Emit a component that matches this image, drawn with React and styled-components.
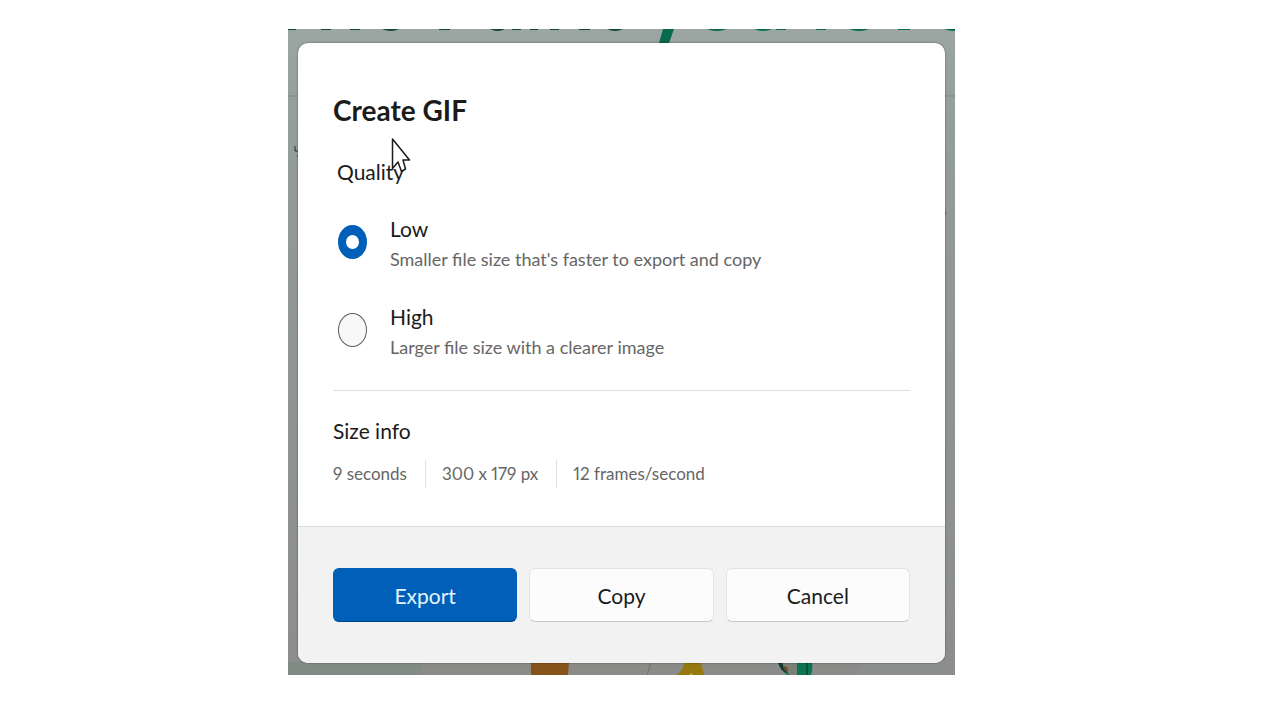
import React, { useState } from "react";
import styled, { createGlobalStyle } from "styled-components";

const qualities = [
  {
    value: "low",
    label: "Low",
    hint: "Smaller file size that's faster to export and copy",
  },
  {
    value: "high",
    label: "High",
    hint: "Larger file size with a clearer image",
  },
];

const sizeInfo = ["9 seconds", "300 x 179 px", "12 frames/second"];

const Backdrop = () => (
  <BackdropArt viewBox="0 0 667 646" preserveAspectRatio="none" aria-hidden="true">
    <defs>
      <linearGradient id="shade" x1="0" y1="0" x2="0" y2="1">
        <stop offset="0" stopColor="#9ba6a3" />
        <stop offset="0.15" stopColor="#939e9b" />
        <stop offset="0.4" stopColor="#929695" />
        <stop offset="1" stopColor="#8b8e8c" />
      </linearGradient>
    </defs>
    <rect width="667" height="646" fill="url(#shade)" />
    <path d="M0 67H10M657 67H667" stroke="#7c8784" />
    <g fill="#17453c">
      <path d="M0 0h8v1H0zM33 0h10v1H33zM62 0h10v1H62zM94 0h17q-8 4-17 0zM151 0h11v1h-11zM202 0h15q-7 4-15 0zM224 0h9v1h-9zM242 0h8v1h-8zM262 0h9v1h-9zM291 0h11v1h-11zM319 0h16q-8 4-16 0z" />
    </g>
    <g fill="#08694d">
      <path d="M375 0H386L381 14H371zM419 0h20q-10 4-20 0zM466 0h18q-9 4-18 0zM488 0h10v1h-10zM528 0h10v1h-10zM561 0h20q-10 4-20 0zM610 0h12v1h-12zM656 0h11v2q-6 0-11-2z" />
    </g>
    <path d="M7 117v5h3M9 127h1" stroke="#252c2a" fill="none" />
    <path d="M657 182v4" stroke="#4c5452" />
    <path d="M0 633H134V646H0z" fill="#818b86" />
    <path d="M134 633H570V646H134z" fill="#8b8b8a" />
    <path d="M243 633H281L280 646H243z" fill="#86531c" />
    <path d="M363 633L359 646" stroke="#6f706e" />
    <path d="M397 633H413L416 646H389q5-4 8-13z" fill="#94790f" />
    <path d="M401 646q2-4 4 0z" fill="#b5a450" />
    <path d="M490 633H524q1 8-1 13h-23q-8-4-10-13z" fill="#0c7452" />
    <path d="M494 633H509V646H502q-7-4-8-13z" fill="#798176" />
    <path d="M490 633h4q2 8 7 12q-9-3-11-12z" fill="#17372d" />
    <path d="M495 638q5-3 5 5q-4-1-5-5z" fill="#65502d" />
    <path d="M519 633v13" stroke="#075239" strokeWidth="2" />
  </BackdropArt>
);

const Cursor = () => (
  <CursorIcon width="20" height="36" viewBox="0 0 20 36" aria-hidden="true">
    <path
      d="M1.5 1V30.500L7 24L10.500 33.500L14.500 31L12 22H18.500Z"
      fill="#fff"
      stroke="#1b1b1b"
      strokeWidth="1.500"
      strokeLinejoin="round"
    />
  </CursorIcon>
);

const App = () => {
  const [quality, setQuality] = useState("low");

  return (
    <Page>
      <GlobalStyle />
      <Stage>
        <Backdrop />
        <Dialog role="dialog" aria-labelledby="dialog-title">
          <Content>
            <Title id="dialog-title">Create GIF</Title>
            <Options>
              <Legend>
                Quality
                <Cursor />
              </Legend>
              {qualities.map(({ value, label, hint }) => (
                <Option key={value}>
                  <Radio
                    type="radio"
                    name="quality"
                    value={value}
                    checked={quality === value}
                    onChange={(e) => setQuality(e.target.value)}
                  />
                  <OptionText>
                    <OptionLabel>{label}</OptionLabel>
                    <OptionHint>{hint}</OptionHint>
                  </OptionText>
                </Option>
              ))}
            </Options>
            <Divider />
            <SectionTitle>Size info</SectionTitle>
            <InfoList>
              {sizeInfo.map((info) => (
                <li key={info}>{info}</li>
              ))}
            </InfoList>
          </Content>
          <Footer>
            <Button type="button" $primary>
              Export
            </Button>
            <Button type="button">Copy</Button>
            <Button type="button">Cancel</Button>
          </Footer>
        </Dialog>
      </Stage>
    </Page>
  );
};

const GlobalStyle = createGlobalStyle`
  * {
    box-sizing: border-box;
  }
  body {
    margin: 0;
    background-color: #fff;
    color: #1b1b1b;
    font-family: Lato, "Open Sans", sans-serif;
    font-variant-numeric: proportional-nums;
  }
`;

const Page = styled.main`
  display: flex;
  justify-content: center;
  padding: 29px 37px 45px 0;
`;

const Stage = styled.div`
  position: relative;
  width: 100%;
  max-width: 667px;
  padding: 14px 10px 12px;
`;

const BackdropArt = styled.svg`
  position: absolute;
  inset: 0;
  width: 100%;
  height: 100%;
`;

const Dialog = styled.section`
  position: relative;
  overflow: hidden;
  border-radius: 10px;
  background-color: #fff;
  box-shadow: 0 0 2px rgba(0, 0, 0, 0.5);
`;

const Content = styled.div`
  padding: 47px 35px 38px;
`;

const Title = styled.h1`
  margin: 0;
  font-size: 28px;
  line-height: 40px;
  font-weight: 700;
`;

const Options = styled.fieldset`
  margin: 0;
  padding: 0 0 28px;
  border: none;
`;

const Legend = styled.legend`
  position: relative;
  padding: 28px 4px 0;
  font-size: 21px;
  line-height: 28px;
`;

const CursorIcon = styled.svg`
  position: absolute;
  top: 8px;
  left: 58px;
`;

const Option = styled.label`
  display: flex;
  align-items: center;
  gap: 23px;
  padding: 28px 0 0 5px;
`;

const Radio = styled.input`
  appearance: none;
  flex: none;
  width: 29px;
  height: 34px;
  margin: 0 0 4px;
  border: 1px solid #5f5f5f;
  border-radius: 50%;
  background-color: #f8f8f8;
  &:checked {
    border-color: #005fb8;
    border-width: 10px 8px;
    background-color: #fff;
  }
`;

const OptionText = styled.span`
  display: flex;
  flex-direction: column;
`;

const OptionLabel = styled.span`
  font-size: 21px;
  line-height: 30px;
`;

const OptionHint = styled.span`
  color: #666;
  font-size: 18px;
  line-height: 30px;
`;

const Divider = styled.hr`
  height: 1px;
  margin: 0;
  border: none;
  background-color: #e0e0e0;
`;

const SectionTitle = styled.h2`
  margin: 25px 0 14px;
  font-size: 21px;
  line-height: 30px;
  font-weight: 400;
`;

const InfoList = styled.ul`
  display: flex;
  flex-wrap: wrap;
  margin: 0;
  padding: 0;
  list-style: none;
  color: #666;
  font-size: 17px;
  line-height: 28px;
  li + li {
    margin-left: 18px;
    padding-left: 16px;
    border-left: 1px solid #e0e0e0;
  }
`;

const Footer = styled.footer`
  display: flex;
  gap: 12px;
  padding: 41px 35px;
  border-top: 1px solid #dcdcdc;
  background-color: #f2f2f2;
`;

const Button = styled.button`
  flex: 1;
  height: 54px;
  border: 1px solid ${({ $primary }) => ($primary ? "#005fb8" : "#e3e3e3")};
  border-bottom-color: ${({ $primary }) => ($primary ? "#004585" : "#c8c8c8")};
  border-radius: 6px;
  background-color: ${({ $primary }) => ($primary ? "#005fb8" : "#fcfcfc")};
  color: ${({ $primary }) => ($primary ? "#e4f4ff" : "#1b1b1b")};
  font-family: inherit;
  font-size: 21px;
  cursor: pointer;
`;

export default App;
